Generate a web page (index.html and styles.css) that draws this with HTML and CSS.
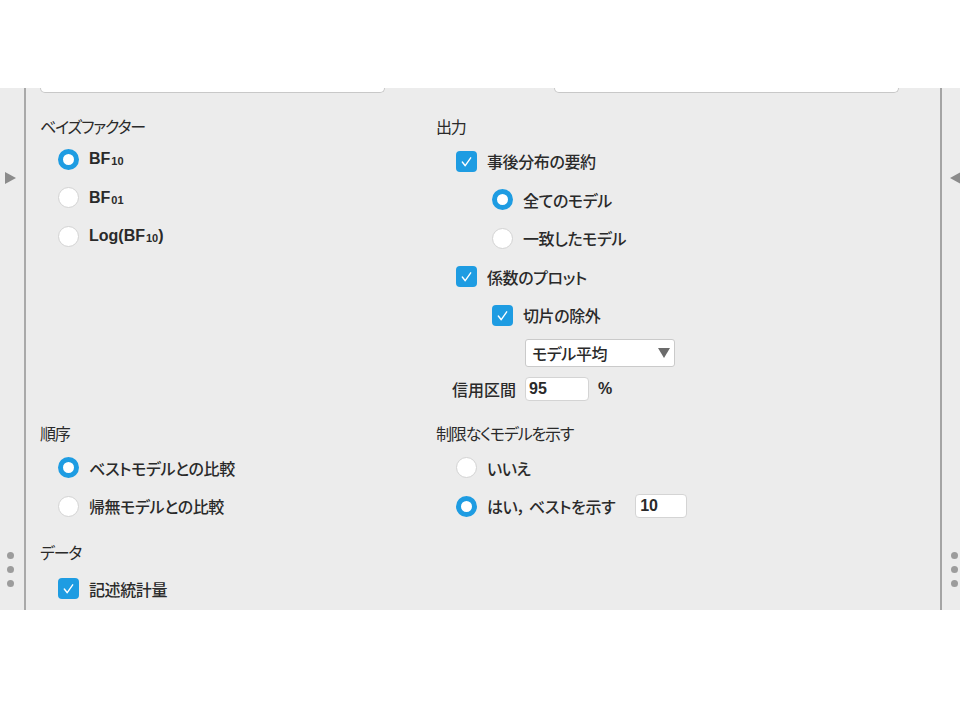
FILE: index.html
```html
<!DOCTYPE html>
<html lang="ja">
<head>
    <meta charset="UTF-8">
    <meta name="viewport" content="width=device-width, initial-scale=1.0">
    <title>ベイズ線形回帰 オプション</title>
    <link rel="stylesheet" href="styles.css">
</head>
<body>
    <div class="panel">
        <div class="side side-left">
            <span class="arrow arrow-right"></span>
            <span class="grip"><i></i><i></i><i></i></span>
        </div>

        <div class="form">
            <div class="lists">
                <div class="list-box"></div>
                <div class="list-box"></div>
            </div>

            <div class="options">
                <div class="group">
                    <div class="group-title">ベイズファクター</div>
                    <label class="opt"><span class="radio checked"></span><span class="latin">BF<span class="sub">10</span></span></label>
                    <label class="opt"><span class="radio"></span><span class="latin">BF<span class="sub">01</span></span></label>
                    <label class="opt"><span class="radio"></span><span class="latin">Log(BF<span class="sub">10</span>)</span></label>
                </div>

                <div class="group group-right">
                    <div class="group-title">出力</div>
                    <label class="opt">
                        <span class="check"><svg viewBox="0 0 20 20"><polyline points="6,10.5 8.8,14 14,6.5"/></svg></span>
                        <span>事後分布の要約</span>
                    </label>
                    <label class="opt nested"><span class="radio checked"></span><span>全てのモデル</span></label>
                    <label class="opt nested"><span class="radio"></span><span>一致したモデル</span></label>
                    <label class="opt">
                        <span class="check"><svg viewBox="0 0 20 20"><polyline points="6,10.5 8.8,14 14,6.5"/></svg></span>
                        <span>係数のプロット</span>
                    </label>
                    <label class="opt nested">
                        <span class="check"><svg viewBox="0 0 20 20"><polyline points="6,10.5 8.8,14 14,6.5"/></svg></span>
                        <span>切片の除外</span>
                    </label>
                    <div class="select-row">
                        <div class="select">モデル平均<span class="caret"></span></div>
                    </div>
                    <div class="field-row">
                        <span>信用区間</span>
                        <input class="num-input" type="text" value="95">
                        <span class="latin">%</span>
                    </div>
                </div>

                <div class="group">
                    <div class="group-title">順序</div>
                    <label class="opt"><span class="radio checked"></span><span>ベストモデルとの比較</span></label>
                    <label class="opt"><span class="radio"></span><span>帰無モデルとの比較</span></label>
                </div>

                <div class="group group-right">
                    <div class="group-title">制限なくモデルを示す</div>
                    <label class="opt"><span class="radio"></span><span>いいえ</span></label>
                    <label class="opt">
                        <span class="radio checked"></span>
                        <span>はい，&nbsp;ベストを示す</span>
                        <input class="num-input short" type="text" value="10">
                    </label>
                </div>

                <div class="group">
                    <div class="group-title">データ</div>
                    <label class="opt">
                        <span class="check"><svg viewBox="0 0 20 20"><polyline points="6,10.5 8.8,14 14,6.5"/></svg></span>
                        <span>記述統計量</span>
                    </label>
                </div>
            </div>
        </div>

        <div class="side side-right">
            <span class="arrow arrow-left"></span>
            <span class="grip"><i></i><i></i><i></i></span>
        </div>
    </div>
</body>
</html>
```

FILE: styles.css
```css
body {
    margin: 0;
    background-color: white;
    font-family: "Liberation Sans", "Noto Sans CJK JP", sans-serif;
    font-size: 16px;
    color: #2a2a2a;
    font-feature-settings: "palt";
}
.panel {
    display: flex;
    height: 522px;
    margin-top: 88px;
    background-color: #ececec;
    overflow: hidden;
}

/* collapse handles on both edges */
.side {
    display: flex;
    flex-direction: column;
    justify-content: space-between;
    align-items: flex-start;
    padding: 84px 0 23px;
    box-sizing: border-box;
    overflow: hidden;
}
.side-left {
    width: 26px;
    padding-left: 5px;
    border-right: 2px solid #a9a9a9;
}
.side-left .grip {
    margin-left: 2px;
}
.side-right {
    width: 20px;
    padding-left: 8px;
    border-left: 2px solid #a4a4a4;
}
.side-right .grip {
    margin-left: 1px;
}
.arrow {
    width: 0;
    height: 0;
    border-top: 6.5px solid transparent;
    border-bottom: 6.5px solid transparent;
}
.arrow-right {
    border-left: 11px solid #8b8b8b;
}
.arrow-left {
    border-right: 11px solid #8b8b8b;
}
.grip {
    display: flex;
    flex-direction: column;
    gap: 7px;
}
.grip i {
    width: 7px;
    height: 7px;
    border-radius: 50%;
    background-color: #9c9c9c;
}

.form {
    flex: 1;
    padding: 0 41px 0 14px;
}
.lists {
    display: flex;
    justify-content: space-between;
}
.list-box {
    width: 343px;
    height: 4px;
    background-color: white;
    border: 1px solid #c8c8c8;
    border-top: none;
    border-radius: 0 0 5px 5px;
}
.options {
    display: grid;
    grid-template-columns: 396px 1fr;
    row-gap: 16px;
    margin-top: 23px;
}
.group-title {
    line-height: 24px;
    margin-bottom: 2px;
    letter-spacing: -1.2px;
}
.group:first-child .group-title {
    margin-bottom: 0;
}
.group:last-child .group-title {
    margin-bottom: 4px;
}
.opt {
    display: flex;
    align-items: center;
    gap: 10px;
    height: 38.5px;
    padding-left: 18px;
    font-weight: 500;
    letter-spacing: -0.4px;
}
.group-right .opt {
    padding-left: 20px;
}
.group-right .opt.nested {
    padding-left: 56px;
}
.latin {
    font-weight: 700;
    letter-spacing: 0;
}
.sub {
    font-size: 11px;
    margin-left: 1px;
    position: relative;
    top: 1px;
}

.radio {
    width: 21px;
    height: 21px;
    box-sizing: border-box;
    border-radius: 50%;
    background-color: white;
    border: 1px solid #d3d3d3;
    flex-shrink: 0;
}
.radio.checked {
    border: 5.5px solid #1e9ce2;
}
.check {
    display: flex;
    width: 21px;
    height: 21px;
    border-radius: 4px;
    background-color: #1e9ce2;
    flex-shrink: 0;
}
.check svg {
    width: 21px;
    height: 21px;
    fill: none;
    stroke: white;
    stroke-width: 1.3;
    stroke-linecap: round;
    stroke-linejoin: round;
}

.select-row {
    display: flex;
    align-items: center;
    height: 36px;
    padding-left: 89px;
}
.select {
    display: flex;
    align-items: center;
    justify-content: space-between;
    width: 150px;
    height: 28px;
    box-sizing: border-box;
    padding: 0 4px 0 6px;
    background-color: white;
    border: 1px solid #cacaca;
    border-radius: 3px;
    font-weight: 500;
    letter-spacing: -0.4px;
}
.caret {
    width: 0;
    height: 0;
    border-left: 6.5px solid transparent;
    border-right: 6.5px solid transparent;
    border-top: 10px solid #6b6b6b;
}
.field-row {
    display: flex;
    align-items: center;
    gap: 9px;
    height: 36px;
    padding-left: 16px;
    font-weight: 500;
}
.num-input {
    width: 64px;
    height: 24px;
    box-sizing: border-box;
    padding: 0 3px;
    border: 1px solid #d4d4d4;
    border-radius: 4px;
    background-color: white;
    font: inherit;
    font-weight: 700;
    color: inherit;
    outline: none;
}
.num-input.short {
    width: 52px;
    margin-left: 10px;
    padding: 0 4px;
}
```
